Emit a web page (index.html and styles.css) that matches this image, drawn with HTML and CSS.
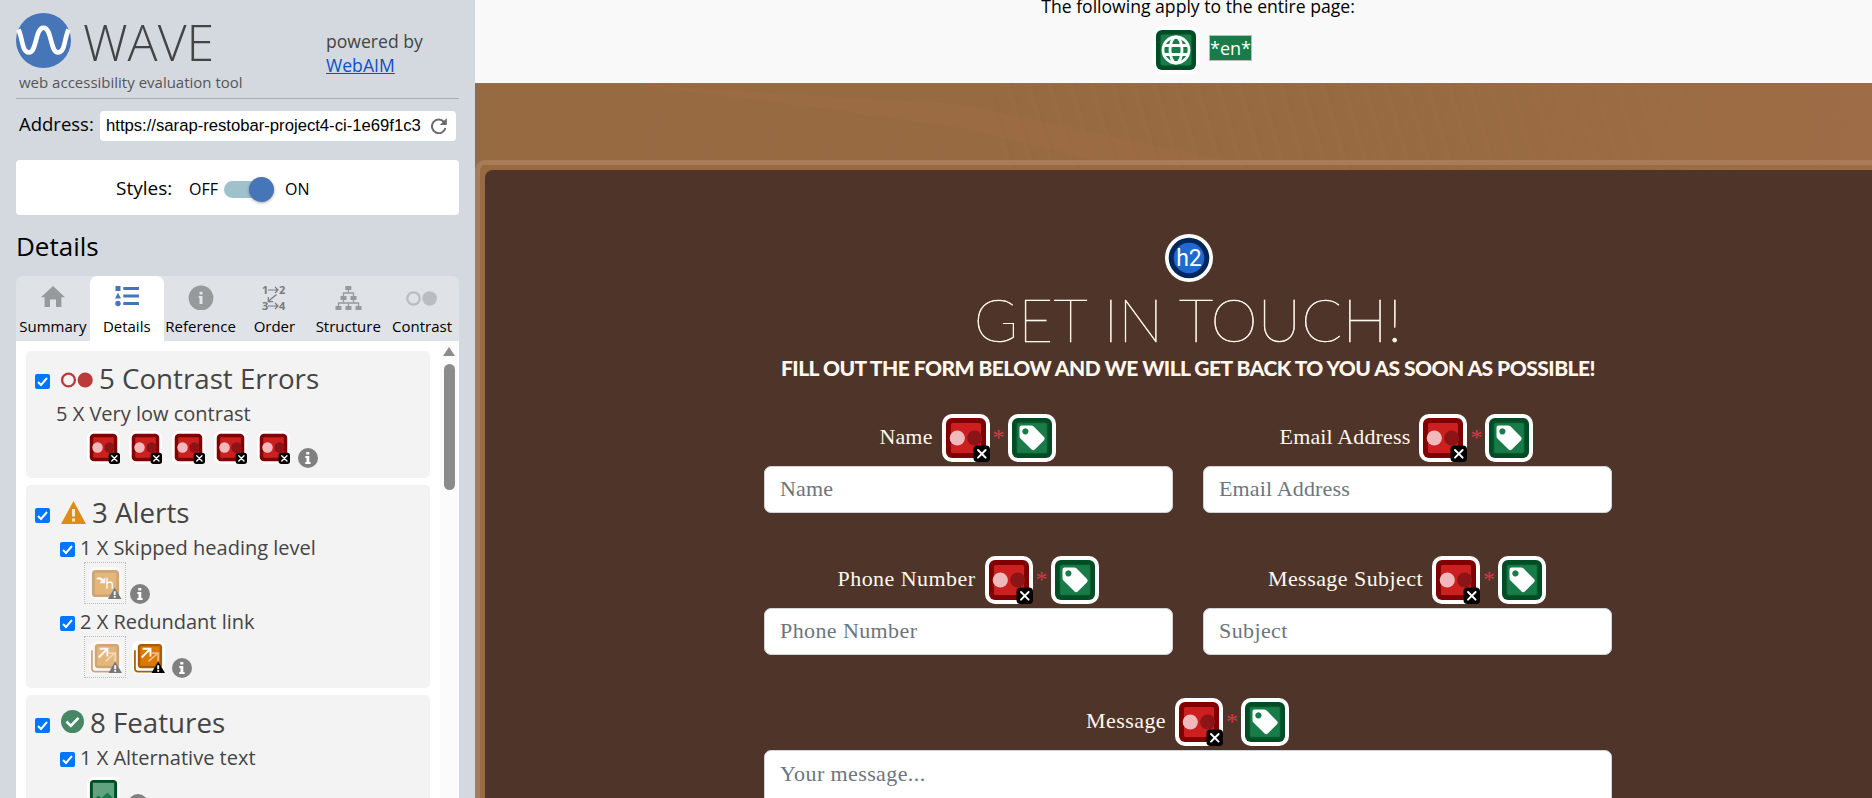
FILE: index.html
```
<!DOCTYPE html>
<html lang="en">
<head>
<meta charset="utf-8">
<title>WAVE Report</title>
<link rel="stylesheet" href="styles.css">
</head>
<body>
<svg class="defs" aria-hidden="true">
  <symbol id="contrast" viewBox="0 0 48 48">
    <rect width="48" height="48" rx="10" fill="#fff"/>
    <rect x="4" y="4" width="40" height="40" rx="6" fill="#800000"/>
    <rect x="9" y="9" width="30" height="30" rx="1.5" fill="#cc2020"/>
    <circle cx="15.3" cy="24" r="7.6" fill="#f0babc"/>
    <circle cx="32.7" cy="24" r="7.6" fill="#8c1416"/>
    <rect x="31.500" y="31.500" width="16.500" height="16.500" rx="4" fill="#000"/>
    <path d="M36 36l7.600 7.600M43.600 36L36 43.600" stroke="#fff" stroke-width="2" stroke-linecap="round"/>
  </symbol>
  <symbol id="label" viewBox="0 0 48 48">
    <rect width="48" height="48" rx="10" fill="#fff"/>
    <rect x="4" y="4" width="40" height="40" rx="6" fill="#004d25"/>
    <rect x="8.500" y="8.500" width="31" height="31" rx="2" fill="#0d6636"/>
    <rect x="9.300" y="9.300" width="29.400" height="29.400" rx="1" fill="#187b48"/>
    <path fill-rule="evenodd" d="M13.500 11.500H23q1.600 0 2.700 1.100L36 23q1.500 1.600 0 3.200L26.800 35.500q-1.600 1.400-3.200 0L12.700 24.800q-1.200-1.100-1.200-2.600V13.500q0-2 2-2ZM17.400 14.300a3.100 3.100 0 1 0 .01 0Z" fill="#fff"/>
  </symbol>
  <symbol id="globe" viewBox="0 0 48 48">
    <rect width="48" height="48" rx="10" fill="#fff"/>
    <rect x="4" y="4" width="40" height="40" rx="6" fill="#004d25"/>
    <rect x="8.500" y="8.500" width="31" height="31" rx="2" fill="#187b48"/>
    <g fill="none" stroke="#fff" stroke-width="2.800"><circle cx="24" cy="24" r="13"/><ellipse cx="24" cy="24" rx="6" ry="13"/><path d="M12 19.500h24M12 28.500h24"/></g>
  </symbol>
  <symbol id="info" viewBox="0 0 20 20">
    <circle cx="10" cy="10" r="10" fill="#808080"/>
    <path d="M8.300 4h3v2.600h-3ZM7.300 8h4v6h1.300v2H7.300v-2h1.200v-4H7.300Z" fill="#fff"/>
  </symbol>
  <symbol id="warn-badge" viewBox="0 0 14 12">
    <path d="M7 0L14 12H0Z" fill="#000"/><path d="M6 4h2v4H6ZM6 9h2v1.600H6Z" fill="#fff"/>
  </symbol>
  <symbol id="skipped" viewBox="0 0 34 34">
    <rect width="34" height="34" rx="7" fill="#fff"/>
    <rect x="3" y="3" width="28" height="28" rx="4" fill="#a95c00"/>
    <rect x="6" y="6" width="22" height="22" rx="1" fill="#da7800"/>
    <path d="M8 11q4-1.500 7 1.500l1.800-1.800v6h-6l2-2Q11 12 8 13Z" fill="#fff"/>
    <path d="M18.500 11v11.500M18.500 17.500q1-2 3.200-2t2.300 2.400v4.500" fill="none" stroke="#fff" stroke-width="1.500"/>
    <use href="#warn-badge" x="19" y="21" width="15" height="12"/>
  </symbol>
  <symbol id="redundant" viewBox="0 0 34 34">
    <rect width="34" height="34" rx="7" fill="#fff"/>
    <path d="M3 9.500v18.500q0 3.500 3.500 3.500H26" fill="none" stroke="#a95c00" stroke-width="1.800"/>
    <rect x="6" y="3" width="25" height="25" rx="3.500" fill="#a95c00"/>
    <rect x="8.500" y="5.500" width="20" height="20" fill="#da7800"/>
    <path d="M17 21L26 13M20 12.500h7v8" fill="none" stroke="#efba7d" stroke-width="2"/>
    <path d="M10 17L18.500 8.500M11 8h8v8" fill="none" stroke="#fff" stroke-width="2"/>
    <use href="#warn-badge" x="20" y="21" width="14" height="12"/>
  </symbol>
  <symbol id="alt" viewBox="0 0 34 34">
    <rect width="34" height="34" rx="7" fill="#fff"/>
    <rect x="3" y="3" width="28" height="28" rx="4" fill="#004d25"/>
    <rect x="6" y="6" width="22" height="22" fill="#5fa37f"/>
    <path d="M6 23l6-4 3 3 6-6 7 7v5H6Z" fill="#187b48"/>
  </symbol>
</svg>

<div class="layout">
  <aside class="sidebar">
    <header class="brand">
      <div class="brand-main">
        <div class="logo">
          <svg width="55" height="55" viewBox="0 0 55 55"><circle cx="27.500" cy="27.500" r="27.500" fill="#4776b8"/><path d="M2.500 16.500C7 27 6 39.500 13 39.500C21 39.500 19 14.800 27.500 14.800C36 14.800 34 39.500 42 39.500C49 39.500 48 27 52.500 16.500" fill="none" stroke="#fff" stroke-width="4.600"/></svg>
          <span class="wordmark">WAVE</span>
        </div>
        <div class="tagline">web accessibility evaluation tool</div>
      </div>
      <div class="powered">powered by<br><a href="#">WebAIM</a></div>
    </header>
    <div class="address">
      <span class="address-label">Address:</span>
      <div class="address-box"><span class="url">https://sarap-restobar-project4-ci-1e69f1c3</span>
        <svg width="16" height="16" viewBox="0 0 16 16"><path d="M13 4A6.800 6.800 0 1 0 14.400 10" fill="none" stroke="#6b6b6b" stroke-width="2"/><path d="M15.800 0v7H8.800Z" fill="#6b6b6b"/></svg>
      </div>
    </div>
    <div class="styles-box"><span class="styles-label">Styles:</span><span class="off">OFF</span><span class="switch"><span class="knob"></span></span><span class="on">ON</span></div>
    <h1 class="panel-title">Details</h1>
    <nav class="tabs">
      <div class="tab"><svg width="24" height="26" viewBox="0 0 24 26"><path d="M12 2L0 13.200h3.600V23H9v-7.500h6V23h5.400v-9.800H24Z" fill="#979a9d"/></svg><span>Summary</span></div>
      <div class="tab active"><svg width="24" height="26" viewBox="0 0 24 26"><g fill="#4776b8"><path d="M.5 2h5v5h-5ZM3 8.800l3 5.700H0ZM8.300 2.900H24V6H8.300ZM8.300 10.400H24v3H8.300ZM8.300 18H24v3H8.300Z"/><circle cx="3" cy="19.500" r="2.700"/></g></svg><span>Details</span></div>
      <div class="tab"><svg width="26" height="26" viewBox="0 0 26 26"><circle cx="13" cy="14" r="12.400" fill="#979a9d"/><path d="M11.500 7.800h3v2.600h-3ZM10.700 12h3.800v8h-3v-6h-.8Z" fill="#e3e5e9"/></svg><span>Reference</span></div>
      <div class="tab"><svg width="26" height="28" viewBox="0 0 26 28"><g class="digits"><text x="1" y="10">1</text><text x="18" y="10">2</text><text x="1" y="26">3</text><text x="18" y="26">4</text></g><path d="M7 6h10M14 3l3 3-3 3M7 22h10M14 19l3 3-3 3M15.500 10.500L7 17.500M7.300 13v4.700h4.800" fill="none" stroke="#777b80" stroke-width="1.200"/></svg><span>Order</span></div>
      <div class="tab"><svg width="27" height="26" viewBox="0 0 27 26"><path d="M10.300 2h6v4h-6ZM5.500 12h6v4h-6ZM15.500 12h6v4h-6ZM.5 22h6v4h-6ZM10.500 22h6v4h-6ZM20.500 22h6v4h-6Z" fill="#979a9d"/><path d="M13.400 6v3M8.500 12V9h10v3M8.500 16v3M18.500 16v3M3.500 22v-3h20v3M13.500 19v3" fill="none" stroke="#979a9d" stroke-width="1.300"/></svg><span>Structure</span></div>
      <div class="tab"><svg width="33" height="26" viewBox="0 0 33 26"><circle cx="7.500" cy="14.500" r="6.200" fill="none" stroke="#b9bcc1" stroke-width="2.200"/><circle cx="23.700" cy="14.500" r="7.300" fill="#b9bcc1"/></svg><span>Contrast</span></div>
    </nav>
    <div class="panel">
      <div class="cards">
        <section class="card card-contrast">
          <h2 class="card-head"><span class="check"><svg viewBox="0 0 15 15"><path d="M3 8l3 3 6-7" fill="none" stroke="#fff" stroke-width="2"/></svg></span><svg class="head-icon" width="32" height="23" viewBox="0 0 32 23"><circle cx="7.500" cy="13" r="6.400" fill="none" stroke="#bb3a3a" stroke-width="2.300"/><circle cx="24.200" cy="13" r="7.600" fill="#bb3a3a"/></svg><span>5 Contrast Errors</span></h2>
          <div class="item plain">5 X Very low contrast</div>
          <div class="icons up"><span class="cell"><svg><use href="#contrast"/></svg></span><span class="cell"><svg><use href="#contrast"/></svg></span><span class="cell"><svg><use href="#contrast"/></svg></span><span class="cell"><svg><use href="#contrast"/></svg></span><span class="cell"><svg><use href="#contrast"/></svg></span><svg class="info"><use href="#info"/></svg></div>
        </section>
        <section class="card">
          <h2 class="card-head"><span class="check"><svg viewBox="0 0 15 15"><path d="M3 8l3 3 6-7" fill="none" stroke="#fff" stroke-width="2"/></svg></span><svg class="head-icon" width="25" height="23" viewBox="0 0 25 23"><path d="M12.500 0L25 23H0Z" fill="#e18b17"/><path d="M11 8h3v7.500h-3ZM11 17.500h3v3h-3Z" fill="#f7ead6"/></svg><span>3 Alerts</span></h2>
          <div class="item"><span class="check"><svg viewBox="0 0 15 15"><path d="M3 8l3 3 6-7" fill="none" stroke="#fff" stroke-width="2"/></svg></span>1 X Skipped heading level</div>
          <div class="icons"><span class="cell hidden-icon"><svg><use href="#skipped"/></svg></span><svg class="info"><use href="#info"/></svg></div>
          <div class="item second"><span class="check"><svg viewBox="0 0 15 15"><path d="M3 8l3 3 6-7" fill="none" stroke="#fff" stroke-width="2"/></svg></span>2 X Redundant link</div>
          <div class="icons"><span class="cell hidden-icon"><svg><use href="#redundant"/></svg></span><span class="cell low"><svg><use href="#redundant"/></svg></span><svg class="info"><use href="#info"/></svg></div>
        </section>
        <section class="card">
          <h2 class="card-head"><span class="check"><svg viewBox="0 0 15 15"><path d="M3 8l3 3 6-7" fill="none" stroke="#fff" stroke-width="2"/></svg></span><svg class="head-icon raised" width="23" height="23" viewBox="0 0 23 23"><circle cx="11.500" cy="11.500" r="11.500" fill="#478765"/><path d="M5.500 11.500l4.300 4.300 7.700-8" fill="none" stroke="#fff" stroke-width="2.600"/></svg><span>8 Features</span></h2>
          <div class="item"><span class="check"><svg viewBox="0 0 15 15"><path d="M3 8l3 3 6-7" fill="none" stroke="#fff" stroke-width="2"/></svg></span>1 X Alternative text</div>
          <div class="icons alt-row"><span class="cell"><svg><use href="#alt"/></svg></span><svg class="info"><use href="#info"/></svg></div>
        </section>
      </div>
      <div class="scrollbar"><span class="arrow"></span><span class="thumb"></span></div>
    </div>
  </aside>

  <main class="page">
    <div class="page-items">
      <div class="page-note">The following apply to the entire page:</div>
      <div class="page-icons"><svg class="big"><use href="#globe"/></svg><span class="lang">*en*</span></div>
    </div>
    <div class="hero">
      <svg class="fronds" width="1397" height="88" viewBox="0 0 1397 88" preserveAspectRatio="none">
        <defs>
          <linearGradient id="warm"><stop offset="0" stop-color="#9e6d45" stop-opacity="0"/><stop offset="1" stop-color="#9e6c46"/></linearGradient>
          <pattern id="leaf" width="21" height="88" patternUnits="userSpaceOnUse" patternTransform="skewX(16)"><rect x="5" width="5" height="88" fill="#9e6e46" opacity=".25"/><rect x="10" width="3" height="88" fill="#906640" opacity=".12"/></pattern>
        </defs>
        <rect x="520" width="877" height="88" fill="url(#leaf)"/>
        <rect x="850" width="547" height="88" fill="url(#warm)"/>
        <path d="M150 0L485 20L750 76H620L485 44L330 22Z" fill="#9f6d46" opacity=".45"/>
        <path d="M170 88l15-60M230 80l14-50M290 80l12-44M350 80l12-40M410 85l16-50M460 86l14-48" stroke="#9c6d4a" stroke-width="9" opacity=".18"/>
      </svg>
      <div class="frame">
        <section class="contact">
          <svg class="heading-badge" viewBox="0 0 48 48"><circle cx="24" cy="24" r="24" fill="#fff"/><circle cx="24" cy="24" r="20.300" fill="#00265c"/><circle cx="24" cy="24" r="15.300" fill="#1f69cf"/><text x="24" y="32">h2</text></svg>
          <h2 class="title">GET IN TOUCH!</h2>
          <p class="subtitle">FILL OUT THE FORM BELOW AND WE WILL GET BACK TO YOU AS SOON AS POSSIBLE!</p>
          <form class="form">
            <div class="field"><div class="label"><span class="label-text">Name</span><svg class="big"><use href="#contrast"/></svg><span class="star">*</span><svg class="big"><use href="#label"/></svg></div><input placeholder="Name"></div>
            <div class="field"><div class="label"><span class="label-text">Email Address</span><svg class="big"><use href="#contrast"/></svg><span class="star">*</span><svg class="big"><use href="#label"/></svg></div><input placeholder="Email Address"></div>
            <div class="field spaced"><div class="label"><span class="label-text">Phone Number</span><svg class="big"><use href="#contrast"/></svg><span class="star">*</span><svg class="big"><use href="#label"/></svg></div><input placeholder="Phone Number"></div>
            <div class="field spaced"><div class="label"><span class="label-text">Message Subject</span><svg class="big"><use href="#contrast"/></svg><span class="star">*</span><svg class="big"><use href="#label"/></svg></div><input placeholder="Subject"></div>
            <div class="field wide spaced"><div class="label"><span class="label-text">Message</span><svg class="big"><use href="#contrast"/></svg><span class="star">*</span><svg class="big"><use href="#label"/></svg></div><textarea placeholder="Your message..."></textarea></div>
          </form>
        </section>
      </div>
    </div>
  </main>
</div>
</body>
</html>
```
FILE: styles.css
```
* { box-sizing: border-box; }
body { margin: 0; overflow: hidden; font-family: "Open Sans", sans-serif; color: #000; }
svg { display: block; flex: none; }
.defs { position: absolute; width: 0; height: 0; }
.layout { display: flex; height: 798px; overflow: hidden; }

/* Sidebar */
.sidebar { width: 475px; flex: none; height: 798px; padding: 13px 16px 0; background: #d4d9e0; display: flex; flex-direction: column; }
.brand { height: 86px; flex: none; display: flex; border-bottom: 1px solid #a9abad; }
.brand-main { width: 310px; }
.logo { display: flex; height: 55px; gap: 12px; }
.wordmark { font-size: 50px; font-weight: 300; line-height: 59px; color: #444; letter-spacing: 0; }
.tagline { font-size: 15px; line-height: 20px; padding: 4px 0 0 3px; color: #555; white-space: nowrap; }
.powered { padding-top: 16px; font-size: 17.600px; line-height: 24px; color: #444; }
.powered a { color: #0b50c4; }
.address { height: 30px; flex: none; margin-top: 12px; display: flex; align-items: center; }
.address-label { width: 84px; padding-left: 3px; font-size: 18.500px; line-height: 28px; padding-bottom: 5px; }
.address-box { width: 356px; height: 30px; background: #fff; border-radius: 4px; display: flex; align-items: center; padding: 0 9px 0 6px; justify-content: space-between; }
.url { font: 16.670px/20px "Liberation Sans", sans-serif; white-space: nowrap; padding-bottom: 1px; }
.styles-box { height: 55px; flex: none; margin-top: 19px; background: #fff; border-radius: 4px; display: flex; align-items: center; padding-left: 100px; padding-top: 3px; }
.styles-label { width: 73px; font-size: 19px; line-height: 26px; padding-bottom: 2px; }
.off { width: 35px; font-size: 16px; }
.switch { width: 50px; height: 17px; border-radius: 9px; background: #9fc1cb; display: flex; align-items: center; justify-content: flex-end; margin-right: 11px; }
.knob { width: 25px; height: 25px; flex: none; border-radius: 50%; background: #4776b8; box-shadow: 0 1px 3px rgba(0,0,0,.35); }
.on { font-size: 16px; }
.panel-title { margin: 0; padding: 13px 0 0 0; height: 61px; flex: none; font-size: 26px; line-height: 36px; font-weight: 400; }
.tabs { height: 65px; flex: none; display: grid; grid-template-columns: repeat(6, 1fr); background: #dfe2e7; border-radius: 7px 7px 0 0; }
.tab { display: flex; flex-direction: column; align-items: center; justify-content: space-between; padding: 8px 0 4px; font-size: 15px; line-height: 22px; border-radius: 7px 7px 0 0; white-space: nowrap; }
.tab.active { background: #fff; }
.digits text { font: 700 11px "Open Sans", sans-serif; fill: #777b80; }
.panel { flex: 1; min-height: 0; background: #fff; display: flex; overflow: hidden; }
.cards { width: 424px; padding: 10px 10px 0; }
.card { height: 203px; margin-bottom: 7px; padding-top: 8px; background: #f3f3f3; border-radius: 5px; color: #444; }
.card-contrast { height: 127px; }
.card-head { margin: 0; height: 38px; font-size: 27.700px; line-height: 38px; font-weight: 400; display: flex; align-items: center; padding-left: 9px; white-space: nowrap; }
.check { width: 15px; height: 15px; flex: none; border-radius: 2px; background: #0075ff; }
.card-head .check { margin: 6px 11px 0 0; }
.head-icon { margin-right: 6px; }
.raised { margin-top: -2px; }
.item { height: 28px; margin-top: 3px; font-size: 20px; line-height: 28px; display: flex; align-items: center; padding-left: 34px; white-space: nowrap; }
.item .check { margin: 3px 5px 0 0; }
.item.plain { padding-left: 30px; }
.item.second { margin-top: 4px; }
.icons { height: 42px; display: flex; padding-left: 58px; }
.cell { width: 42px; height: 42px; display: flex; align-items: center; justify-content: center; }
.cell svg { width: 33px; height: 33px; }
.hidden-icon { border: 1px dotted #bbb; }
.hidden-icon svg { opacity: .5; }
.low { padding-left: 3px; }
.info { width: 20px; height: 20px; margin: 22px 0 0 4px; }
.up { padding-left: 56px; }
.up .cell { width: 42.500px; height: 39px; }
.up .info { margin: 20px 0 0 3px; }
.alt-row { padding-left: 56px; }
.scrollbar { width: 19px; background: #fbfbfb; display: flex; flex-direction: column; align-items: center; }
.arrow { margin: 6px 1px 0 0; border: 6.500px solid transparent; border-top: 0; border-bottom: 9px solid #8b8b8b; }
.thumb { width: 11px; height: 126px; margin: 8px 1px 0 0; border-radius: 6px; background: #8b8b8b; }

/* Evaluated page */
.page { flex: 1; min-width: 0; height: 798px; overflow: hidden; }
.page-items { width: 1446px; height: 84px; background: #f9f9f9; border-bottom: 1px solid #777; display: flex; flex-direction: column; align-items: center; }
.page-note { font-size: 17.600px; line-height: 24px; margin-top: -6px; }
.page-icons { display: flex; gap: 9px; margin-top: 8px; padding-left: 8px; }
.big { width: 48px; height: 48px; }
.lang { height: 26px; margin-top: 9px; padding: 0; border: 1px solid #bbb; background: #187b48; color: #fff; font-size: 18px; line-height: 24px; }
.hero { width: 1426px; height: 714px; padding-top: 76px; background: #976a42; position: relative; }
.fronds { position: absolute; left: 0; top: 0; }
.frame { position: relative; height: 700px; border: 5px solid #a97b56; border-radius: 10px; padding: 5px; }
.contact { height: 690px; background: #4f3529; border-radius: 8px; padding-top: 64px; display: flex; flex-direction: column; align-items: center; color: #fff8ee; }
.heading-badge { width: 48px; height: 48px; margin-left: 1px; }
.heading-badge text { font: 400 23px Roboto, sans-serif; fill: #fff; text-anchor: middle; }
.title { margin: 7px 0 0; font: 100 60px/60px Lato, sans-serif; letter-spacing: .25px; white-space: nowrap; -webkit-text-stroke: .6px #fff8ee; }
.subtitle { margin: 6px 0 33px; font: 900 21px/26px Lato, sans-serif; letter-spacing: -.53px; white-space: nowrap; }
.form { width: 848px; display: grid; grid-template-columns: 1fr 1fr; column-gap: 30px; row-gap: 43px; font-family: "Liberation Serif", serif; }
.field { display: flex; flex-direction: column; gap: 4px; }
.wide { grid-column: 1 / 3; }
.label { height: 48px; display: flex; align-items: center; justify-content: center; padding-right: 2px; }
.label-text { font-size: 22px; line-height: 25px; padding: 0 9px 3px 0; letter-spacing: .15px; }
.spaced .label { padding-right: 1px; }
.spaced .label-text { letter-spacing: .45px; }
.star { width: 18px; text-align: center; color: #dc3545; font-size: 24px; padding-bottom: 2px; }
input, textarea { width: 100%; height: 47px; margin: 0; border: 1px solid #ced4da; border-radius: 7px; background: #fff; padding: 0 15px 2px; font: 22px/28px "Liberation Serif", serif; letter-spacing: .15px; outline: 0; }
.spaced input, .spaced textarea { letter-spacing: .4px; }
textarea { display: block; height: 120px; padding-top: 9px; resize: none; }
::placeholder { color: #6c757d; opacity: 1; }
```
